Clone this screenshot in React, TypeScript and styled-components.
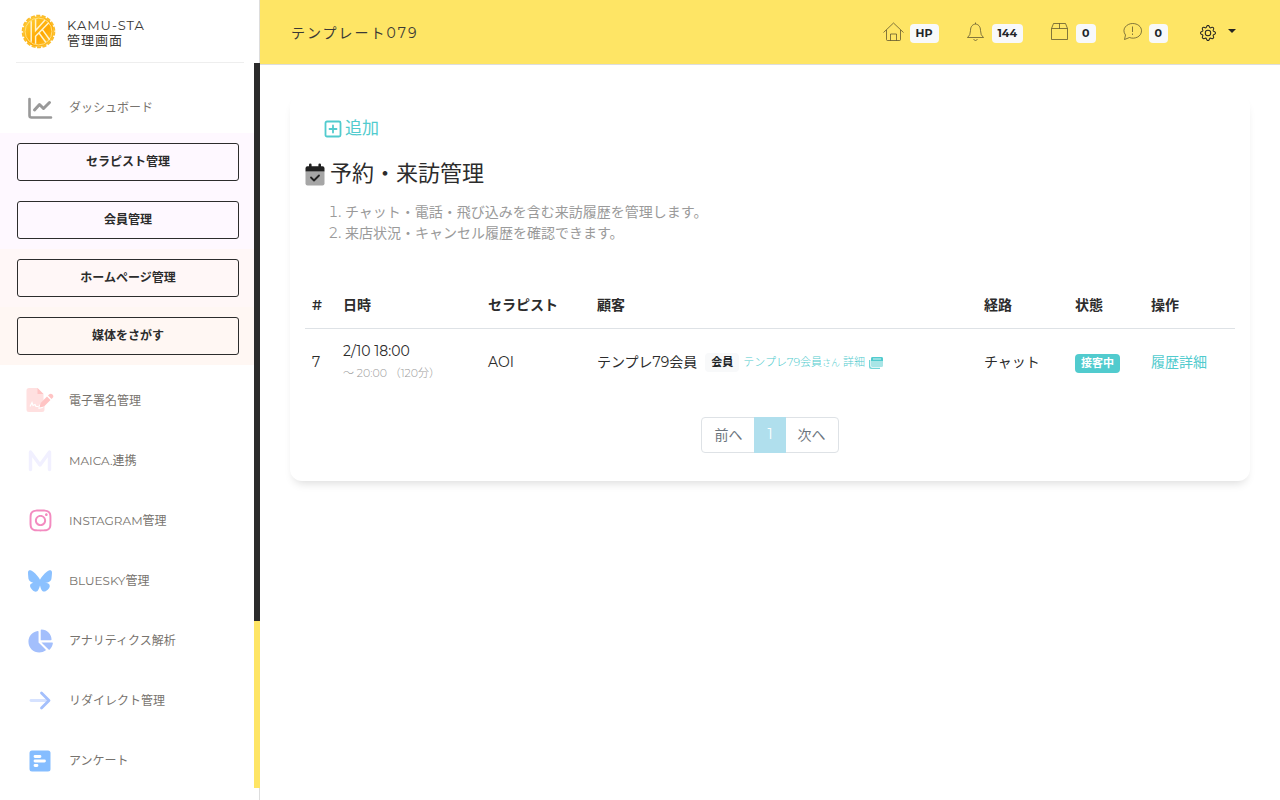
import React from "react";
import styled, { createGlobalStyle } from "styled-components";
import { FaBluesky, FaInstagram, FaChartPie } from "react-icons/fa6";
import { BsGear } from "react-icons/bs";

const GlobalStyle = createGlobalStyle`
  *, *::before, *::after { box-sizing: border-box; }
  body {
    margin: 0;
    background: #fff;
    color: #2c2c2c;
    font-family: Montserrat, Inter, "Noto Sans CJK JP", sans-serif;
    font-size: 14px;
    font-weight: 400;
    line-height: 21px;
  }
  a { color: #51cbce; text-decoration: none; }
  button { font-family: inherit; cursor: pointer; }
`;

const Page = styled.div`
  display: flex;
  min-height: 100vh;
`;

const Sidebar = styled.aside`
  flex: 0 0 260px;
  height: 100vh;
  display: flex;
  flex-direction: column;
  box-shadow: inset -1px 0 0 #ddd;
`;

const Brand = styled.a`
  flex: 0 0 63px;
  display: flex;
  align-items: center;
  gap: 11px;
  margin: 0 16px;
  padding-left: 5px;
  border-bottom: 1px solid #eee;
  color: #3a3936;
  font-size: 13px;
  line-height: 15px;
  letter-spacing: 1px;
`;

const BrandName = styled.span`
  padding-top: 4px;
`;

const SidebarBody = styled.div`
  flex: 1;
  min-height: 0;
  display: flex;
  margin-bottom: 12px;
`;

const Nav = styled.nav`
  flex: 1;
  min-width: 0;
  overflow: hidden;
  padding-top: 19px;
`;

const Track = styled.div`
  flex: 0 0 6px;
  background: #fee565;
`;

const Thumb = styled.div`
  height: 77%;
  background: #2b2b2b;
`;

const NavLink = styled.a`
  display: flex;
  align-items: center;
  gap: 15px;
  height: 50px;
  margin-bottom: 10px;
  padding-left: 26px;
  color: #77736e;
  font-size: 12px;
`;

const IconCell = styled.span`
  flex: 0 0 28px;
  display: flex;
  justify-content: center;
  padding-top: 1px;
`;

const Groups = styled.div`
  margin: -9px 0 10px;
`;

const Group = styled.div<{ $tint: string }>`
  padding: 10px 15px 10px 17px;
  background: ${(p) => p.$tint};
`;

const GroupButton = styled.button`
  display: block;
  width: 100%;
  height: 38px;
  padding: 0 0 3px;
  border: 1px solid #2c2c2c;
  border-radius: 3px;
  background: transparent;
  color: #2c2c2c;
  font-size: 12px;
  font-weight: 600;
`;

const Main = styled.div`
  flex: 1;
  min-width: 0;
`;

const TopBar = styled.header`
  display: flex;
  align-items: center;
  justify-content: space-between;
  height: 65px;
  padding: 0 44px 0 31px;
  background: #fee565;
  border-bottom: 1px solid #ddd;
`;

const SiteName = styled.a`
  padding-top: 2px;
  color: #3a3936;
  font-size: 14px;
  letter-spacing: 2px;
`;

const Tools = styled.div`
  display: flex;
  align-items: center;
  gap: 26px;
`;

const Tool = styled.a`
  display: flex;
  align-items: center;
  gap: 6px;
  color: #252422;
`;

const CountBadge = styled.span`
  height: 19px;
  margin-top: 2px;
  padding: 0 6px;
  border-radius: 4px;
  background: #f8f9fa;
  color: #212529;
  font-size: 11px;
  font-weight: 700;
  line-height: 19px;
`;

const MenuButton = styled.button`
  display: flex;
  align-items: center;
  gap: 12px;
  margin-left: 6px;
  padding: 2px 0 0;
  border: 0;
  background: none;
  color: #252422;
`;

const Caret = styled.span`
  margin-bottom: 4px;
  border: 4px solid transparent;
  border-top-color: #252422;
  border-bottom: 0;
`;

const Content = styled.main`
  padding: 30px;
`;

const Card = styled.section`
  padding: 23px 15px 28px;
  border-radius: 12px;
  background: #fff;
  box-shadow: 0 6px 10px -4px rgba(0, 0, 0, 0.15);
`;

const AddLink = styled.a`
  display: flex;
  align-items: center;
  gap: 3px;
  width: max-content;
  margin-left: 19px;
  font-size: 17px;
`;

const Title = styled.h1`
  display: flex;
  align-items: center;
  gap: 5px;
  margin: 18px 0 11px;
  font-size: 22px;
  font-weight: 400;
  line-height: 34px;
`;

const Notes = styled.ol`
  margin: 0 0 38px;
  padding-left: 40px;
  color: #9a9a9a;
`;

const Table = styled.table`
  width: 100%;
  table-layout: fixed;
  border-collapse: collapse;
  th, td { padding: 0 7px; text-align: left; white-space: nowrap; }
  th { height: 46px; padding-top: 2px; font-weight: 600; border-bottom: 1px solid #dee2e6; }
  td { height: 69px; }
`;

const Col = styled.col<{ $w?: number }>`
  width: ${(p) => (p.$w ? `${p.$w}px` : "auto")};
`;

const Muted = styled.small`
  display: block;
  color: #9a9a9a;
  font-size: 11px;
  font-weight: 300;
  line-height: 23px;
`;

const Customer = styled.div`
  display: flex;
  align-items: center;
  gap: 8px;
`;

const Badge = styled.span<{ $solid?: boolean }>`
  display: inline-block;
  height: 19px;
  padding: 0 6px;
  border-radius: 4px;
  background: ${(p) => (p.$solid ? "#51cbce" : "#f8f9fa")};
  color: ${(p) => (p.$solid ? "#fff" : "#212529")};
  font-size: 11px;
  font-weight: 700;
  line-height: 19px;
  vertical-align: middle;
`;

const DetailLink = styled.a`
  display: flex;
  align-items: center;
  gap: 4px;
  margin-left: -4px;
  font-size: 11px;
  font-weight: 300;
  small { font-size: 9px; }
`;

const Pager = styled.nav`
  display: flex;
  width: max-content;
  height: 36px;
  margin: 20px auto 0;
  border: 1px solid #dee2e6;
  border-radius: 4px;
`;

const PageButton = styled.button<{ $active?: boolean }>`
  margin: ${(p) => (p.$active ? "-1px 0" : "0")};
  padding: ${(p) => (p.$active ? "0 13px 3px" : "0 12px 3px")};
  border: 0;
  background: ${(p) => (p.$active ? "#b0dfed" : "transparent")};
  color: ${(p) => (p.$active ? "#fff" : "#6c757d")};
  font-size: 14px;
  font-weight: 400;
`;

const Logo = () => (
  <svg width="35" height="35" viewBox="0 0 36 36" aria-hidden="true">
    <defs>
      <linearGradient id="gold" x1="0" y1="0" x2="1" y2="1">
        <stop offset="0" stopColor="#ffd63f" />
        <stop offset="0.6" stopColor="#ffa800" />
        <stop offset="1" stopColor="#ffc83c" />
      </linearGradient>
    </defs>
    <circle cx="18" cy="18" r="15.800" fill="url(#gold)" />
    <circle cx="18" cy="18" r="16.300" fill="none" stroke="#fbbd2a" strokeWidth="2" strokeDasharray="4.200 1.490" />
    <circle cx="18" cy="18" r="13.800" fill="none" stroke="#ffe080" strokeWidth="1" />
    <path d="M10.500 7.500v21M15 5.500v11.500L24.500 6.500M15 30.500v-7.500L28.500 9M18.500 19.500l7 9.500M22 16l7.500 10.500" fill="none" stroke="#fff4cf" strokeWidth="1.500" />
  </svg>
);

const ChartIcon = () => (
  <svg width="28" height="28" viewBox="0 0 28 28" fill="none" stroke="#999" strokeWidth="2.600" strokeLinecap="round" strokeLinejoin="round">
    <path d="M3.500 5v16.500a2 2 0 0 0 2 2H25" />
    <path d="m8.500 16 5-5.500 4 4 6-6" strokeWidth="3" />
  </svg>
);

const SignIcon = () => (
  <svg width="28" height="28" viewBox="0 0 28 28">
    <path d="M3 1H11.500l6 6v6l-5 6v3l4-1 2-2v3.500a2.500 2.500 0 0 1-2.500 2.500H3A2.500 2.500 0 0 1 .5 22.500v-19A2.500 2.500 0 0 1 3 1Z" fill="#ffe0e0" />
    <path d="M11.500 1v6h6ZM14.500 16l6.500-6.500 3.500 3.500-6.500 6.500-4.500 1ZM22 8.500l1-1a2 2 0 0 1 3.500 3.500l-1 1Z" fill="#ffc4c4" />
    <path d="m4 19.500 2-4 1 3 2-1 1 2h2.500" fill="none" stroke="#fff" strokeWidth="1.200" />
  </svg>
);

const MaicaIcon = () => (
  <svg width="28" height="28" viewBox="0 0 28 28" fill="none" stroke="#f1f0ff" strokeWidth="3.400" strokeLinecap="round" strokeLinejoin="round">
    <path d="M4.500 22.500V5L14 18l9.500-13v17.500" />
  </svg>
);

const RedirectIcon = () => (
  <svg width="28" height="28" viewBox="0 0 28 28" fill="none" strokeWidth="2.800" strokeLinecap="round" strokeLinejoin="round">
    <path d="M5 13.500h17" stroke="#d6e2ff" />
    <path d="m15.500 6 7.500 7.500-7.500 7.500" stroke="#a3bffc" />
  </svg>
);

const SurveyIcon = () => (
  <svg width="28" height="28" viewBox="0 0 28 28">
    <rect x="3.500" y="3.500" width="21" height="21" rx="2.500" fill="#85bdff" />
    <path d="M9 9.500h5M9 14h9.500M9 18.500h2" stroke="#fff" strokeWidth="2.800" strokeLinecap="round" />
  </svg>
);

const LineIcon = ({ children }: { children: React.ReactNode }) => (
  <svg width="21" height="21" viewBox="0 0 21 21" fill="none" stroke="#4d4628" strokeWidth="0.700" strokeLinejoin="round" aria-hidden="true">
    {children}
  </svg>
);

const HomeIcon = () => (
  <LineIcon>
    <path d="M.5 10.500 10.500 1l10 9.500M3.500 8v9.500q0 1 1 1h12q1 0 1-1V8M7.500 18.500v-6.500h6v6.500" />
  </LineIcon>
);

const BellIcon = () => (
  <LineIcon>
    <path d="M2.500 15.500q3-2 3-7c0-8.500 10-8.500 10 0q0 5 3 7ZM8.500 17.500q2 2 4 0M10.500 2V.5" />
  </LineIcon>
);

const BoxIcon = () => (
  <LineIcon>
    <path d="M2.500 6.500v11h16v-11ZM2.500 6.500l2-5h12l2 5M10.500 1.500v5" />
  </LineIcon>
);

const ChatIcon = () => (
  <LineIcon>
    <path d="M2.500 17.500 3.500 13C-1 7 5 1.500 10.500 1.500c5 0 9 3 9 7.300 0 6-7 8.700-12 6.700ZM10.500 4.500V10M10.500 11.500V13" />
  </LineIcon>
);

const AddIcon = () => (
  <svg width="18" height="18" viewBox="0 0 18 18" fill="none" stroke="#51cbce" strokeWidth="1.800" strokeLinecap="round">
    <rect x="1.500" y="1.500" width="15" height="15" rx="1.500" />
    <path d="M9 5.500v7M5.500 9h7" />
  </svg>
);

const CalendarIcon = () => (
  <svg width="20" height="23" viewBox="0 0 20 23">
    <path d="M.5 8.500h19v12a2 2 0 0 1-2 2h-15a2 2 0 0 1-2-2Z" fill="#a6a6a6" />
    <path d="M.5 8.500V5.200q0-2 2-2H4V1.800q0-1.300 1.300-1.300t1.300 1.300v1.400h6.800V1.800q0-1.300 1.300-1.300T16 1.800v1.400h1.500q2 0 2 2v3.300Z" fill="#212121" />
    <path d="m6 14.500 3 3 5-5" fill="none" stroke="#212121" strokeWidth="1.800" strokeLinecap="round" strokeLinejoin="round" />
  </svg>
);

const WindowIcon = () => (
  <svg width="14" height="12" viewBox="0 0 14 12">
    <path d="M0 3v6.500A2.500 2.500 0 0 0 2.500 12H11v-1.300H3A1.700 1.700 0 0 1 1.300 9V3Z" fill="#51cbce" opacity=".8" />
    <rect x="2" y="0" width="12" height="10" rx="1.500" fill="#a8e5e6" />
    <path d="M2 4V1.500Q2 0 3.500 0h9Q14 0 14 1.500V4Z" fill="#51cbce" />
    <path d="M4 2h8" stroke="#d5f3f4" />
  </svg>
);

const navItems = [
  { label: "電子署名管理", icon: <SignIcon /> },
  { label: "MAICA.連携", icon: <MaicaIcon /> },
  { label: "INSTAGRAM管理", icon: <FaInstagram size={25} color="#f38bc0" /> },
  { label: "BLUESKY管理", icon: <FaBluesky size={24} color="#8bc1ff" /> },
  { label: "アナリティクス解析", icon: <FaChartPie size={26} color="#a3bffc" /> },
  { label: "リダイレクト管理", icon: <RedirectIcon /> },
  { label: "アンケート", icon: <SurveyIcon /> },
];

const groups = [
  { label: "セラピスト管理", tint: "#fef8ff" },
  { label: "会員管理", tint: "#fef8ff" },
  { label: "ホームページ管理", tint: "#fff7f7" },
  { label: "媒体をさがす", tint: "#fff7f3" },
];

const tools = [
  { name: "ホームページ", icon: <HomeIcon />, value: "HP" },
  { name: "お知らせ", icon: <BellIcon />, value: "144" },
  { name: "注文", icon: <BoxIcon />, value: "0" },
  { name: "メッセージ", icon: <ChatIcon />, value: "0" },
];

export default function App() {
  return (
    <Page>
      <GlobalStyle />
      <Sidebar>
        <Brand href="#">
          <Logo />
          <BrandName>KAMU-STA<br />管理画面</BrandName>
        </Brand>
        <SidebarBody>
          <Nav>
            <NavLink href="#"><IconCell><ChartIcon /></IconCell>ダッシュボード</NavLink>
            <Groups>
              {groups.map((g) => (
                <Group key={g.label} $tint={g.tint}>
                  <GroupButton type="button">{g.label}</GroupButton>
                </Group>
              ))}
            </Groups>
            {navItems.map((n) => (
              <NavLink key={n.label} href="#"><IconCell>{n.icon}</IconCell>{n.label}</NavLink>
            ))}
          </Nav>
          <Track><Thumb /></Track>
        </SidebarBody>
      </Sidebar>
      <Main>
        <TopBar>
          <SiteName href="#">テンプレート079</SiteName>
          <Tools>
            {tools.map((t) => (
              <Tool key={t.name} href="#" aria-label={t.name}>
                {t.icon}
                <CountBadge>{t.value}</CountBadge>
              </Tool>
            ))}
            <MenuButton type="button" aria-label="設定">
              <BsGear size={16} />
              <Caret />
            </MenuButton>
          </Tools>
        </TopBar>
        <Content>
          <Card>
            <AddLink href="#"><AddIcon />追加</AddLink>
            <Title><CalendarIcon />予約・来訪管理</Title>
            <Notes>
              <li>チャット・電話・飛び込みを含む来訪履歴を管理します。</li>
              <li>来店状況・キャンセル履歴を確認できます。</li>
            </Notes>
            <Table>
              <colgroup>
                <Col $w={31} />
                <Col $w={145} />
                <Col $w={109} />
                <Col />
                <Col $w={91} />
                <Col $w={76} />
                <Col $w={91} />
              </colgroup>
              <thead>
                <tr>
                  <th>#</th>
                  <th>日時</th>
                  <th>セラピスト</th>
                  <th>顧客</th>
                  <th>経路</th>
                  <th>状態</th>
                  <th>操作</th>
                </tr>
              </thead>
              <tbody>
                <tr>
                  <td>7</td>
                  <td>2/10 18:00<Muted>〜 20:00 （120分）</Muted></td>
                  <td>AOI</td>
                  <td>
                    <Customer>
                      <span>テンプレ79会員</span>
                      <Badge>会員</Badge>
                      <DetailLink href="#">
                        <span>テンプレ79会員<small>さん</small> 詳細</span>
                        <WindowIcon />
                      </DetailLink>
                    </Customer>
                  </td>
                  <td>チャット</td>
                  <td><Badge $solid>接客中</Badge></td>
                  <td><a href="#">履歴詳細</a></td>
                </tr>
              </tbody>
            </Table>
            <Pager aria-label="ページ送り">
              <PageButton type="button">前へ</PageButton>
              <PageButton type="button" $active>1</PageButton>
              <PageButton type="button">次へ</PageButton>
            </Pager>
          </Card>
        </Content>
      </Main>
    </Page>
  );
}
